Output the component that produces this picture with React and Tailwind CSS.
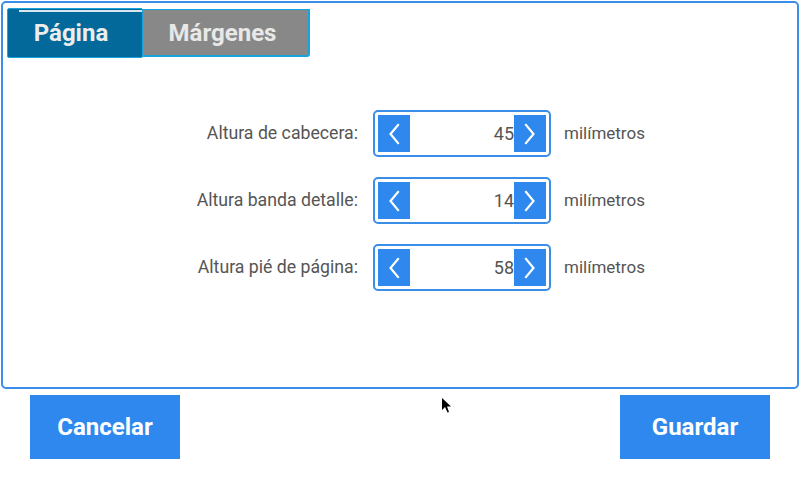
import React from "react";

const Chevron = ({ dir }) => (
  <svg width="12" height="22" viewBox="0 0 12 22" fill="none">
    {dir === "left" ? (
      <path d="M10 2 L2.5 11 L10 20" stroke="white" strokeWidth="2.2" strokeLinecap="square" />
    ) : (
      <path d="M2 2 L9.5 11 L2 20" stroke="white" strokeWidth="2.2" strokeLinecap="square" />
    )}
  </svg>
);

const Row = ({ label, value }) => (
  <div className="flex items-center h-[47px]">
    <div className="w-[258px] text-right text-[17.7px] text-[#555555]">{label}</div>
    <div className="ml-[15px] w-[178px] h-[47px] border-2 border-[#3a8ee6] rounded-[5px] flex items-center px-[3px]">
      <div className="w-[32px] h-[37px] bg-[#2e88ee] flex items-center justify-center">
        <Chevron dir="left" />
      </div>
      <div className="w-[104px] text-right text-[18px] text-[#555555] leading-none">{value}</div>
      <div className="w-[32px] h-[37px] bg-[#2e88ee] flex items-center justify-center">
        <Chevron dir="right" />
      </div>
    </div>
    <div className="ml-[13px] text-[17px] text-[#555555]">milímetros</div>
  </div>
);

export default function App() {
  return (
    <div className="relative w-[800px] h-[480px] bg-white overflow-hidden" style={{ fontFamily: "Roboto, 'Liberation Sans', sans-serif" }}>
      <div className="ml-px mt-px w-[798px] h-[388px] border-2 border-[#3a8ee6] rounded-[5px] pl-1 pt-[5px]">
        <div className="flex items-start">
          <div className="relative w-[136px] h-[50px] bg-[#03699a] border border-[#16a5e0] rounded-[2px] flex items-center justify-center pr-2">
            <div className="absolute top-[1px] left-[11px] right-0 h-[2px] bg-[#d8e6ee]" />
            <span className="text-[24px] font-bold text-[#ececec]">Página</span>
          </div>
          <div className="mt-px w-[167px] h-[48px] bg-[#888888] border-r-2 border-b-2 border-t border-[#16a5e0] rounded-br-[3px] flex items-center justify-center pr-[6px]">
            <span className="text-[24px] font-bold text-[#e8e8e8]">Márgenes</span>
          </div>
        </div>
        <div className="mt-[52px] pl-[93px] flex flex-col gap-[20px]">
          <Row label="Altura de cabecera:" value="45" />
          <Row label="Altura banda detalle:" value="14" />
          <Row label="Altura pié de página:" value="58" />
        </div>
      </div>
      <div className="flex justify-between px-[30px] mt-[6px]">
        <div className="w-[150px] h-[64px] bg-[#2e88ee] flex items-center justify-center text-white text-[24px] font-bold">Cancelar</div>
        <div className="w-[150px] h-[64px] bg-[#2e88ee] flex items-center justify-center text-white text-[24px] font-bold">Guardar</div>
      </div>
      <svg className="absolute left-[441px] top-[397px]" width="12" height="18" viewBox="0 0 12 18">
        <path d="M1 1 L1 13 L4 10 L6.5 15.5 L8 15 L6 9.5 L10 9.5 Z" fill="black" />
      </svg>
    </div>
  );
}
